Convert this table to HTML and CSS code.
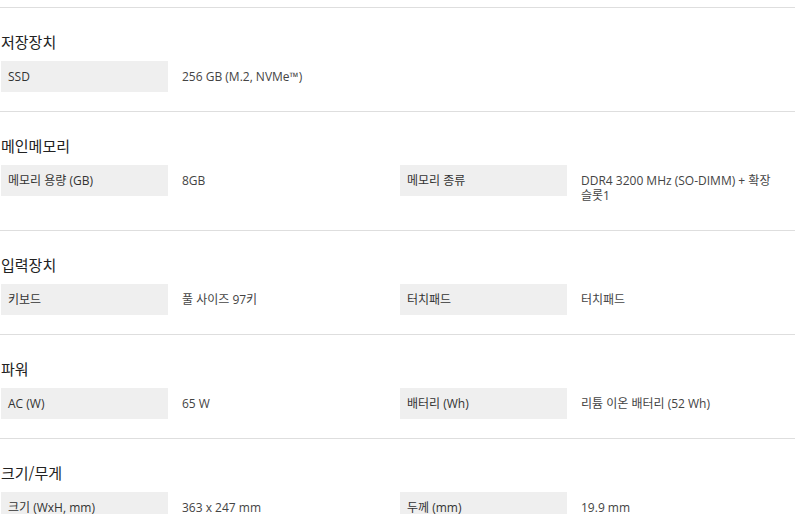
FILE: index.html
```html
<!DOCTYPE html>
<html lang="ko">
<head>
<meta charset="utf-8">
<link rel="stylesheet" href="styles.css">
</head>
<body>
<div class="specs">
  <section class="group">
    <h3 class="group-title">저장장치</h3>
    <div class="rows">
      <div class="item"><div class="label">SSD</div><div class="value">256 GB (M.2, NVMe™)</div></div>
    </div>
  </section>
  <section class="group">
    <h3 class="group-title">메인메모리</h3>
    <div class="rows">
      <div class="item"><div class="label">메모리 용량 (GB)</div><div class="value">8GB</div></div>
      <div class="item"><div class="label">메모리 종류</div><div class="value">DDR4 3200 MHz (SO-DIMM) + 확장<br>슬롯1</div></div>
    </div>
  </section>
  <section class="group">
    <h3 class="group-title">입력장치</h3>
    <div class="rows">
      <div class="item"><div class="label">키보드</div><div class="value">풀 사이즈 97키</div></div>
      <div class="item"><div class="label">터치패드</div><div class="value">터치패드</div></div>
    </div>
  </section>
  <section class="group">
    <h3 class="group-title">파워</h3>
    <div class="rows">
      <div class="item"><div class="label">AC (W)</div><div class="value">65 W</div></div>
      <div class="item"><div class="label">배터리 (Wh)</div><div class="value">리튬 이온 배터리 (52 Wh)</div></div>
    </div>
  </section>
  <section class="group">
    <h3 class="group-title">크기/무게</h3>
    <div class="rows">
      <div class="item"><div class="label">크기 (WxH, mm)</div><div class="value">363 x 247 mm</div></div>
      <div class="item"><div class="label">두께 (mm)</div><div class="value">19.9 mm</div></div>
    </div>
  </section>
</div>
</body>
</html>
```
FILE: styles.css
```css
html, body {
  margin: 0;
  padding: 0;
  background: #fff;
}
body {
  font-family: "Open Sans", "Noto Sans CJK KR", sans-serif;
  color: #333;
  overflow: hidden;
}
.specs {
  width: 795px;
  padding-top: 7px;
}
.group {
  border-top: 1px solid #dedede;
  padding: 23px 0 19px 0;
}
.group-title {
  margin: 0 0 8px 1px;
  font-size: 15px;
  line-height: 22px;
  font-weight: 400;
  color: #222;
  font-family: "Noto Sans CJK KR", sans-serif;
}
.rows {
  display: grid;
  grid-template-columns: 399px 1fr;
  padding-left: 1px;
}
.item {
  display: flex;
  align-items: flex-start;
}
.label {
  width: 167px;
  flex: none;
  background: #efefef;
  padding: 8px 7px;
  box-sizing: border-box;
  font-size: 12px;
  line-height: 15px;
  color: #333;
}
.value {
  margin-left: 14px;
  padding: 8px 0;
  font-size: 12px;
  line-height: 15px;
  color: #444;
}
```
